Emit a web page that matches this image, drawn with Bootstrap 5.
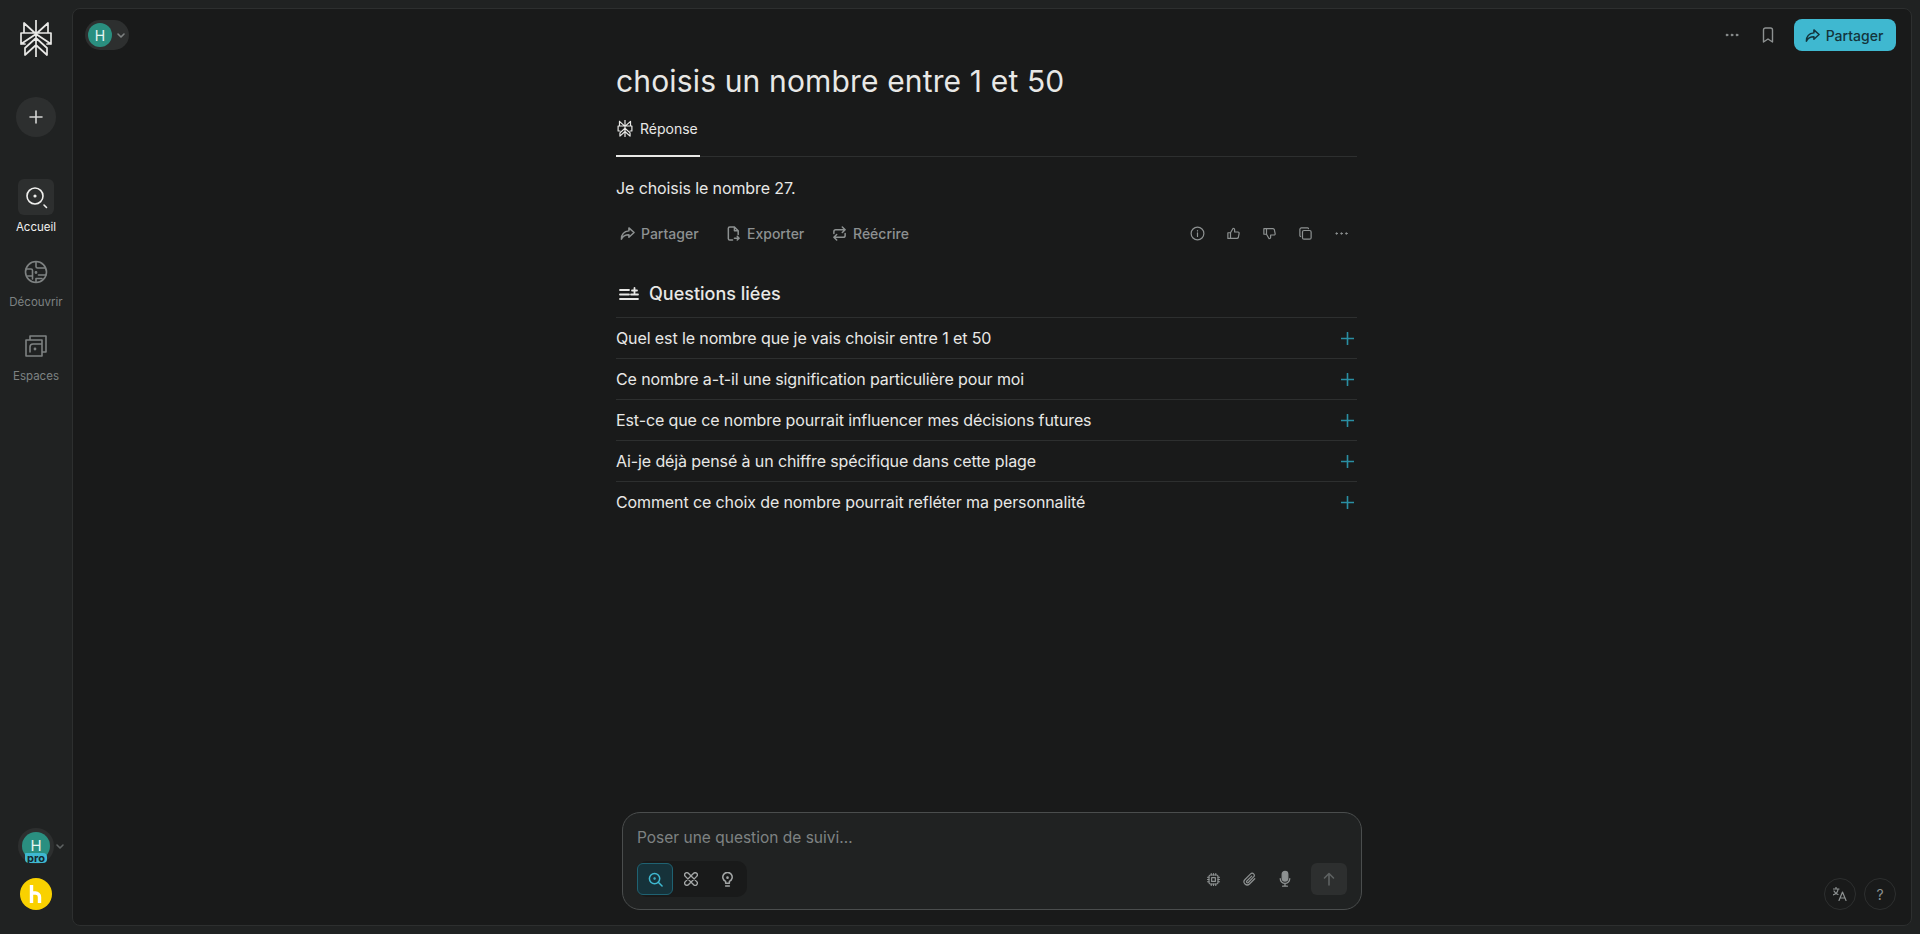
<!DOCTYPE html>
<html lang="fr">
<head>
  <meta charset="UTF-8" />
  <meta name="viewport" content="width=device-width, initial-scale=1" />
  <title>choisis un nombre entre 1 et 50</title>
  <link href="https://cdn.jsdelivr.net/npm/bootstrap@5.3.0/dist/css/bootstrap.min.css" rel="stylesheet" />
  <style>
    html, body { height: 100%; }
    body { background: #202222; color: #e8e8e6; font-family: Inter, "Liberation Sans", sans-serif; overflow: hidden; }
    svg { display: block; flex: none; }
    .app-shell { height: 934px; fill: none; stroke: currentColor; stroke-width: 1.6; stroke-linecap: round; stroke-linejoin: round; }
    .side-rail { width: 72px; flex: none; padding-top: 20px; padding-bottom: 24px; }
    .app-logo { color: #e8e8e6; margin-bottom: 40px; }
    .new-btn { width: 40px; height: 40px; background: #2d2f2f; border: 0; color: #d4d5d4; margin-bottom: 42px; }
    .rail-item { color: #7e8282; font-size: 11.5px; line-height: 16px; width: 72px; height: 74.5px; }
    .rail-item.on { color: #f0f0ee; }
    .rail-tile { width: 36px; height: 36px; border-radius: 6px; margin-bottom: 4px; }
    .rail-item.on .rail-tile { background: #2d2f2f; }
    .avatar-h { background: #2a8f80; color: #e8f5f2; font-size: 14px; }
    .rail-avatar { width: 36px; height: 36px; background: #2d2f2f; margin-bottom: 14px; }
    .rail-avatar .avatar-h { width: 28px; height: 28px; font-size: 15px; }
    .pro-tag { left: 7px; top: 25px; background: #3fb8d0; color: #14282c; font-size: 11px; font-weight: 700; line-height: 10px; height: 10px; padding: 0 2px; border-radius: 1px 4px 4px 4px; }
    .rail-chev { left: 37px; top: 13px; color: #5e6262; }
    .yellow-h { width: 32px; height: 32px; background: #f9d100; color: #fff; }
    .main-panel { margin: 8px 8px 8px 0; background: #191a1a; border: 1px solid #2d2f2f; border-radius: 8px; }
    .top-bar { height: 52px; padding: 0 15px 0 12px; }
    .acct-pill { background: #2d2f2f; height: 30px; width: 44px; padding-left: 3px; gap: 4px; color: #7e8282; }
    .acct-pill .avatar-h { width: 24px; height: 24px; }
    .ghost-icon { color: #8d9191; }
    .dots-top { margin-right: 22px; }
    .mark-top { margin-right: 19px; }
    .share-btn { width: 102px; height: 32px; background: #3fb8d0; color: #13343b; border: 0; border-radius: 8px; font-size: 14px; font-weight: 500; gap: 6px; padding-right: 8px; }
    .thread-col { width: 741px; margin-left: 543px; }
    .thread-title { font-size: 30px; line-height: 40px; font-weight: 400; letter-spacing: .15px; margin: 0; color: #e8e8e6; }
    .tab-row { border-bottom: 1px solid #2d2f2f; height: 47px; margin-top: 9px; }
    .tab-on { height: 47px; width: 84px; border-bottom: 2px solid #e8e8e6; margin-bottom: -1px; font-size: 14px; font-weight: 400; gap: 7px; padding-bottom: 9px; padding-left: 1px; }
    .answer-text { font-size: 16px; line-height: 24px; margin: 19px 0 0; color: #e8e8e6; letter-spacing: -.1px; }
    .action-row { height: 36px; margin-top: 15px; color: #8d9191; }
    .act-link { font-size: 14px; font-weight: 500; gap: 6px; padding-left: 4px; width: 106px; }
    .tool-icons { gap: 21px; padding-right: 8px; }
    .related-head { font-size: 18px; line-height: 24px; font-weight: 500; gap: 10px; padding-left: 3px; margin-top: 31px; margin-bottom: 11px; }
    .related-row { height: 41px; border-top: 1px solid #2d2f2f; font-size: 16px; color: #e8e8e6; padding-right: 3px; letter-spacing: -.11px; }
    .plus-teal { color: #2a8fa3; }
    .ask-wrap { width: 740px; margin-left: 549px; margin-bottom: 15px; }
    .ask-box { height: 98px; background: #202222; border: 1px solid #4a4d4d; border-radius: 18px; padding: 12px 14px 12px 11px; }
    .ask-input { background: transparent; border: 0; padding: 0 0 0 3px; height: 24px; font-size: 15.5px; color: #e8e8e6; box-shadow: none; }
    .ask-input::placeholder { color: #7e8282; opacity: 1; }
    .ask-input:focus { background: transparent; color: #e8e8e6; box-shadow: none; }
    .mode-group { width: 110px; height: 36px; background: #191a1a; border-radius: 10px; padding: 2px 0; color: #a4a7a7; margin-left: 3px; }
    .mode-btn { width: 36px; height: 32px; border-radius: 6px; }
    .mode-btn.on { background: #16323a; border: 1px solid #1f6272; color: #3fb8d0; }
    .ask-tools { color: #8d9191; }
    .tool-slot { width: 36px; height: 32px; }
    .send-tile { width: 36px; height: 32px; background: #2d2f2f; border-radius: 6px; color: #5e6262; margin-left: 8px; }
    .help-dock { right: 15px; bottom: 15px; gap: 8px; }
    .help-btn { width: 32px; height: 32px; border: 1px solid #2d2f2f; color: #8d9191; font-size: 14px; }
  </style>
</head>
<body>
  <div class="app-shell d-flex">
    <nav class="side-rail d-flex flex-column align-items-center">
      <svg class="app-logo" width="32" height="37" viewBox="0 0 32 37" stroke-width="1.7"><path d="M16 0v37M4 3l12 11L28 3v10M4 3v10M1 13h30v11h-4M1 13v11h4M16 14L1 24M16 14l15 10M16 18L5 28v7l11-10 11 10v-7z"/></svg>
      <button class="new-btn rounded-circle d-flex align-items-center justify-content-center" aria-label="Nouveau">
        <svg width="16" height="16" viewBox="0 0 16 16"><path d="M8 2v12M2 8h12"/></svg>
      </button>
      <div class="rail-item on d-flex flex-column align-items-center">
        <div class="rail-tile d-flex align-items-center justify-content-center">
          <svg width="24" height="24" viewBox="0 0 24 24"><circle cx="11" cy="11" r="8"/><circle cx="11" cy="11" r=".8" fill="currentColor"/><path d="M20 20l2.500 2.500"/></svg>
        </div>
        Accueil
      </div>
      <div class="rail-item d-flex flex-column align-items-center">
        <div class="rail-tile d-flex align-items-center justify-content-center">
          <svg width="24" height="24" viewBox="0 0 24 24"><circle cx="12" cy="12" r="10.500"/><path d="M2 9h5a1.500 1.500 0 0 1 1.500 1.500V19M12 2v4.500A1.500 1.500 0 0 0 13.500 8H21M22 15h-7.500M3.500 16h5M12 22v-3.500h6"/><circle cx="12" cy="12.500" r=".6" fill="currentColor"/></svg>
        </div>
        Découvrir
      </div>
      <div class="rail-item d-flex flex-column align-items-center">
        <div class="rail-tile d-flex align-items-center justify-content-center">
          <svg width="22" height="22" viewBox="0 0 22 22"><path d="M5 5V1h16v16h-4M1 5h16v16H1zM5 17v-5a3 3 0 0 1 3-3h9"/><circle cx="10" cy="14" r=".6" fill="currentColor"/></svg>
        </div>
        Espaces
      </div>
      <div class="mt-auto d-flex flex-column align-items-center">
        <div class="rail-avatar rounded-circle position-relative d-flex align-items-center justify-content-center">
          <div class="avatar-h rounded-circle d-flex align-items-center justify-content-center">H</div>
          <span class="pro-tag position-absolute">pro</span>
          <svg class="rail-chev position-absolute" width="10" height="10" viewBox="0 0 10 10"><path d="M2 4l3 3 3-3"/></svg>
        </div>
        <div class="yellow-h rounded-circle d-flex align-items-center justify-content-center">
          <svg width="14" height="18" viewBox="0 0 14 18" stroke-width="3.400" stroke-linecap="butt" stroke-linejoin="miter"><path d="M2.500 0v18M2.500 8h4a4 4 0 0 1 4 4v6"/></svg>
        </div>
      </div>
    </nav>

    <main class="main-panel flex-grow-1 d-flex flex-column position-relative">
      <div class="top-bar d-flex align-items-center justify-content-between">
        <div class="acct-pill rounded-pill d-flex align-items-center">
          <div class="avatar-h rounded-circle d-flex align-items-center justify-content-center">H</div>
          <svg width="10" height="10" viewBox="0 0 10 10"><path d="M2 4l3 3 3-3"/></svg>
        </div>
        <div class="d-flex align-items-center">
          <svg class="ghost-icon dots-top" width="14" height="14" viewBox="0 0 14 14" fill="currentColor" stroke-width="1"><circle cx="2" cy="7" r=".9"/><circle cx="7" cy="7" r=".9"/><circle cx="12" cy="7" r=".9"/></svg>
          <svg class="ghost-icon mark-top" width="14" height="16" viewBox="0 0 14 16" stroke-width="1.400"><path d="M2.500 15V3a2 2 0 0 1 2-2h5a2 2 0 0 1 2 2v12L7 12z"/></svg>
          <button class="share-btn d-flex align-items-center justify-content-center">
            <svg width="15" height="15" viewBox="0 0 16 16"><path d="M9.500 2l5.500 5-5.500 5V9.300C6 9.300 3 10.500 1.500 14c0-5 3-8.300 8-8.800z"/></svg>
            Partager
          </button>
        </div>
      </div>

      <div class="thread-col">
        <h1 class="thread-title">choisis un nombre entre 1 et 50</h1>
        <div class="tab-row">
          <div class="tab-on d-flex align-items-center">
            <svg width="16" height="17" viewBox="0 0 32 37" stroke-width="2.600"><path d="M16 0v37M4 3l12 11L28 3v10M4 3v10M1 13h30v11h-4M1 13v11h4M16 18L5 28v7l11-10 11 10v-7z"/></svg>
            Réponse
          </div>
        </div>
        <p class="answer-text">Je choisis le nombre 27.</p>
        <div class="action-row d-flex align-items-center justify-content-between">
          <div class="d-flex">
            <div class="act-link d-flex align-items-center">
              <svg width="15" height="15" viewBox="0 0 16 16"><path d="M9.500 2l5.500 5-5.500 5V9.300C6 9.300 3 10.500 1.500 14c0-5 3-8.300 8-8.800z"/></svg>Partager
            </div>
            <div class="act-link d-flex align-items-center">
              <svg width="15" height="15" viewBox="0 0 16 16"><path d="M7 15H4a1.500 1.500 0 0 1-1.500-1.500v-11A1.500 1.500 0 0 1 4 1h5l4 4v4M9 1v4h4M9 13h5M12 11l2 2-2 2"/></svg>Exporter
            </div>
            <div class="act-link d-flex align-items-center">
              <svg width="15" height="15" viewBox="0 0 16 16"><path d="M11 1l3 3-3 3M14 4H4a2 2 0 0 0-2 2v2M5 15l-3-3 3-3M2 12h10a2 2 0 0 0 2-2V8"/></svg>Réécrire
            </div>
          </div>
          <div class="tool-icons d-flex align-items-center ghost-icon">
            <svg width="15" height="15" viewBox="0 0 20 20"><circle cx="10" cy="10" r="8.500"/><path d="M10 9v5M10 6v.5"/></svg>
            <svg width="15" height="15" viewBox="0 0 20 20"><path d="M6 9l3.500-6c1.200 0 2 .8 2 2v3h4.500a1.500 1.500 0 0 1 1.500 1.800L16.500 15a2 2 0 0 1-2 1.500H6zM2.500 9H6v7.500H2.500z"/></svg>
            <svg width="15" height="15" viewBox="0 0 20 20"><path d="M6 11l3.500 6c1.200 0 2-.8 2-2v-3h4.500a1.500 1.500 0 0 0 1.500-1.800L16.500 5a2 2 0 0 0-2-1.500H6zM2.500 3.500H6V11H2.500z"/></svg>
            <svg width="15" height="15" viewBox="0 0 20 20"><rect x="6" y="6" width="11.500" height="11.500" rx="2"/><path d="M14 3.500a1.500 1.500 0 0 0-1.500-1H4.500a2 2 0 0 0-2 2v8c0 .7.400 1.200 1 1.500"/></svg>
            <svg width="15" height="15" viewBox="0 0 20 20" fill="currentColor" stroke-width="1"><circle cx="3.500" cy="10" r="1.100"/><circle cx="10" cy="10" r="1.100"/><circle cx="16.500" cy="10" r="1.100"/></svg>
          </div>
        </div>
        <div class="related-head d-flex align-items-center">
          <svg width="20" height="16" viewBox="0 0 20 16" stroke-width="1.800"><path d="M1 4h9M1 8.500h9M1 13h18M12 8.500h7M15.500 2v5M13 4.500h5"/></svg>
          Questions liées
        </div>
        <div class="related-row d-flex align-items-center justify-content-between">Quel est le nombre que je vais choisir entre 1 et 50<svg class="plus-teal" width="13" height="13" viewBox="0 0 13 13"><path d="M6.500 .5v12M.5 6.500h12"/></svg></div>
        <div class="related-row d-flex align-items-center justify-content-between">Ce nombre a-t-il une signification particulière pour moi<svg class="plus-teal" width="13" height="13" viewBox="0 0 13 13"><path d="M6.500 .5v12M.5 6.500h12"/></svg></div>
        <div class="related-row d-flex align-items-center justify-content-between">Est-ce que ce nombre pourrait influencer mes décisions futures<svg class="plus-teal" width="13" height="13" viewBox="0 0 13 13"><path d="M6.500 .5v12M.5 6.500h12"/></svg></div>
        <div class="related-row d-flex align-items-center justify-content-between">Ai-je déjà pensé à un chiffre spécifique dans cette plage<svg class="plus-teal" width="13" height="13" viewBox="0 0 13 13"><path d="M6.500 .5v12M.5 6.500h12"/></svg></div>
        <div class="related-row d-flex align-items-center justify-content-between">Comment ce choix de nombre pourrait refléter ma personnalité<svg class="plus-teal" width="13" height="13" viewBox="0 0 13 13"><path d="M6.500 .5v12M.5 6.500h12"/></svg></div>
      </div>

      <div class="ask-wrap mt-auto">
        <div class="ask-box d-flex flex-column justify-content-between">
          <input class="ask-input form-control" type="text" placeholder="Poser une question de suivi…" />
          <div class="d-flex align-items-center justify-content-between">
            <div class="mode-group d-flex">
              <div class="mode-btn on d-flex align-items-center justify-content-center">
                <svg width="15" height="15" viewBox="0 0 16 16"><circle cx="7" cy="7" r="5.500"/><circle cx="7" cy="7" r=".5" fill="currentColor"/><path d="M11 11l4 4"/></svg>
              </div>
              <div class="mode-btn d-flex align-items-center justify-content-center">
                <svg width="14" height="14" viewBox="0 0 16 16"><path d="M5 1.500L14.500 11a2.200 2.200 0 0 1-3.500 3.500L1.500 5A2.200 2.200 0 0 1 5 1.500zM11 1.500L1.500 11A2.200 2.200 0 0 0 5 14.500L14.500 5A2.200 2.200 0 0 0 11 1.500z"/></svg>
              </div>
              <div class="mode-btn d-flex align-items-center justify-content-center">
                <svg width="15" height="15" viewBox="0 0 16 16"><path d="M6 12v-2a5 5 0 1 1 4 0v2zM6 15h4"/><circle cx="8" cy="6" r=".6" fill="currentColor"/></svg>
              </div>
            </div>
            <div class="ask-tools d-flex align-items-center">
              <div class="tool-slot d-flex align-items-center justify-content-center">
                <svg width="15" height="15" viewBox="0 0 20 20"><rect x="4" y="4" width="12" height="12" rx="2"/><rect x="7.500" y="7.500" width="5" height="5"/><path d="M7 2v2M10 2v2M13 2v2M7 16v2M10 16v2M13 16v2M2 7h2M2 10h2M2 13h2M16 7h2M16 10h2M16 13h2"/></svg>
              </div>
              <div class="tool-slot d-flex align-items-center justify-content-center">
                <svg width="15" height="15" viewBox="0 0 20 20"><path d="M17 9l-7 7a4 4 0 0 1-6-6l7.500-7.500a2.700 2.700 0 0 1 4 4L8.500 14a1.300 1.300 0 0 1-2-2l6.500-6.500"/></svg>
              </div>
              <div class="tool-slot d-flex align-items-center justify-content-center">
                <svg width="16" height="18" viewBox="0 0 20 22"><rect x="6.500" y="1.500" width="7" height="12" rx="3.500" fill="currentColor"/><path d="M4 10.500a6 6 0 0 0 12 0M10 16.500v3.500M7 20h6"/></svg>
              </div>
              <div class="send-tile d-flex align-items-center justify-content-center">
                <svg width="14" height="14" viewBox="0 0 14 14"><path d="M7 13V1.500M2.500 6L7 1.500 11.500 6"/></svg>
              </div>
            </div>
          </div>
        </div>
      </div>

      <div class="help-dock position-absolute d-flex">
        <div class="help-btn rounded-circle d-flex align-items-center justify-content-center">
          <svg width="14" height="14" viewBox="0 0 14 14" stroke-width="1.200"><path d="M0 2h6M3 0v2M5 2C5 5 3 7 0 8M1 4c1 2 2.500 3 4 3.500M6 13.500L9.500 5l3.500 8.500M7.200 11h4.600"/></svg>
        </div>
        <div class="help-btn rounded-circle d-flex align-items-center justify-content-center">?</div>
      </div>
    </main>
  </div>
</body>
</html>
